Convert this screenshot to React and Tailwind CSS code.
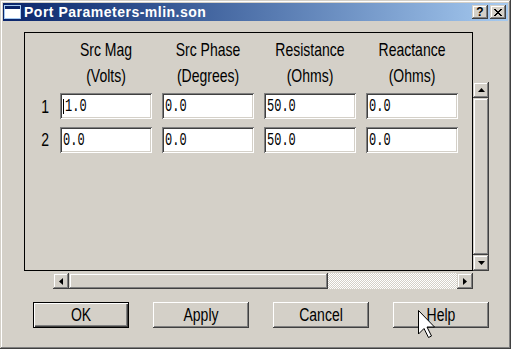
import React from "react";

const raised =
  "bg-[#d4d0c8] shadow-[inset_-1px_-1px_#404040,inset_1px_1px_#ffffff,inset_-2px_-2px_#808080,inset_2px_2px_#d4d0c8]";
const scrollRaised =
  "bg-[#d4d0c8] shadow-[inset_-1px_-1px_#404040,inset_1px_1px_#d4d0c8,inset_-2px_-2px_#808080,inset_2px_2px_#ffffff]";
const sunken =
  "bg-white shadow-[inset_1px_1px_#808080,inset_-1px_-1px_#ffffff,inset_2px_2px_#404040,inset_-2px_-2px_#d4d0c8]";

const columns = [
  ["Src Mag", "(Volts)"],
  ["Src Phase", "(Degrees)"],
  ["Resistance", "(Ohms)"],
  ["Reactance", "(Ohms)"],
];

const rows = [
  ["1.0", "0.0", "50.0", "0.0"],
  ["0.0", "0.0", "50.0", "0.0"],
];

const Tall = ({ children, className = "" }) => (
  <span className={`inline-block ${className}`}>{children}</span>
);

const Arrow = ({ dir }) => {
  const pts = {
    up: "0,4 7,4 3.5,0",
    down: "0,0 7,0 3.5,4",
    left: "4,0 4,7 0,3.5",
    right: "0,0 0,7 4,3.5",
  }[dir];
  const vert = dir === "up" || dir === "down";
  return (
    <svg width={vert ? 7 : 4} height={vert ? 4 : 7} viewBox={vert ? "0 0 7 4" : "0 0 4 7"}>
      <polygon points={pts} fill="#000" />
    </svg>
  );
};

const CellInput = ({ value, caret }) => (
  <div className={`${sunken} h-[26px] flex items-center pl-[3px]`}>
    {caret && <span className="w-px h-[15px] bg-black mr-px" />}
    <Tall className="scale-y-[1.6] font-['Liberation_Mono',monospace] text-[12px] leading-none text-black">
      {value}
    </Tall>
  </div>
);

const DlgButton = ({ label, isDefault }) => (
  <div
    className={`w-[96px] h-[26px] flex items-center justify-center text-black ${
      isDefault
        ? "border border-black bg-[#d4d0c8] shadow-[inset_1px_1px_#ffffff,inset_-1px_-1px_#404040,inset_-2px_-2px_#808080]"
        : raised
    }`}
  >
    <Tall className="scale-y-[1.25] text-[14px] leading-none">{label}</Tall>
  </div>
);

export default function App() {
  return (
    <div className="relative w-[511px] h-[349px] bg-[#d4d0c8] p-[3px] font-['Liberation_Sans',Arial,sans-serif] shadow-[inset_-1px_-1px_#404040,inset_1px_1px_#d4d0c8,inset_-2px_-2px_#808080,inset_2px_2px_#ffffff] overflow-hidden">
      {/* Title bar */}
      <div className="h-[18px] flex items-center bg-gradient-to-r from-[#0a246a] to-[#a6caf0] pl-[1px] pr-[2px]">
        <svg width="17" height="14" viewBox="0 0 17 14" className="mr-[3px]">
          <rect x="0.5" y="0.5" width="16" height="13" fill="#fff" stroke="#a6caf0" />
          <rect x="1" y="1" width="15" height="3" fill="#0a246a" />
        </svg>
        <span className="text-white font-bold text-[14px] tracking-[0.5px] leading-none">Port Parameters-mlin.son</span>
        <div className="ml-auto flex gap-[2px]">
          <div className={`${scrollRaised} w-[16px] h-[14px] flex items-center justify-center text-[12px] font-bold leading-none text-black`}>
            ?
          </div>
          <div className={`${scrollRaised} w-[16px] h-[14px] flex items-center justify-center`}>
            <svg width="8" height="7" viewBox="0 0 8 7">
              <path d="M0 0 L7 7 M1 0 L8 7 M7 0 L0 7 M8 0 L1 7" stroke="#000" strokeWidth="1" />
            </svg>
          </div>
        </div>
      </div>

      {/* Grid area */}
      <div className="flex mt-[11px] ml-[21px]">
        <div className="w-[449px]">
          <div className="h-[239px] border border-black">
            <div className="grid grid-cols-[25px_92px_92px_92px_92px] gap-x-[10px] pt-[3px]">
              <div />
              {columns.map(([a, b]) => (
                <div key={a} className="flex flex-col items-center text-[14px] text-[#000]">
                  <div className="h-[26px] flex items-center">
                    <Tall className="scale-y-[1.3] leading-none">{a}</Tall>
                  </div>
                  <div className="h-[26px] flex items-center">
                    <Tall className="scale-y-[1.3] leading-none">{b}</Tall>
                  </div>
                </div>
              ))}
            </div>
            <div className="mt-[5px] flex flex-col gap-[8px]">
              {rows.map((r, i) => (
                <div key={i} className="grid grid-cols-[25px_92px_92px_92px_92px] gap-x-[10px]">
                  <div className="flex items-center justify-end pr-[1px] text-[14px]">
                    <Tall className="scale-y-[1.3] leading-none">{i + 1}</Tall>
                  </div>
                  {r.map((v, j) => (
                    <CellInput key={j} value={v} caret={i === 0 && j === 0} />
                  ))}
                </div>
              ))}
            </div>
          </div>

          {/* Horizontal scrollbar */}
          <div className="mt-[2px] ml-[29px] w-[420px] h-[16px] flex">
            <div className={`${scrollRaised} w-[16px] h-[16px] flex items-center justify-center`}>
              <Arrow dir="left" />
            </div>
            <div className={`${scrollRaised} w-[259px] h-[16px]`} />
            <div className="flex-1 h-[16px] bg-[repeating-conic-gradient(#ffffff_0%_25%,#d4d0c8_0%_50%)] bg-[length:2px_2px]" />
            <div className={`${scrollRaised} w-[16px] h-[16px] flex items-center justify-center`}>
              <Arrow dir="right" />
            </div>
          </div>
        </div>

        {/* Vertical scrollbar */}
        <div className="mt-[50px] w-[16px] h-[189px] flex flex-col">
          <div className={`${scrollRaised} h-[16px] flex items-center justify-center`}>
            <Arrow dir="up" />
          </div>
          <div className={`${scrollRaised} flex-1`} />
          <div className={`${scrollRaised} h-[16px] flex items-center justify-center`}>
            <Arrow dir="down" />
          </div>
        </div>
      </div>

      {/* Buttons */}
      <div className="mt-[13px] ml-[30px] flex gap-[24px]">
        <DlgButton label="OK" isDefault />
        <DlgButton label="Apply" />
        <DlgButton label="Cancel" />
        <DlgButton label="Help" />
      </div>

      {/* Mouse cursor */}
      <svg className="absolute left-[418px] top-[310px]" width="18" height="29" viewBox="0 0 18 29">
        <polygon
          points="0.5,0.5 0.5,24 6,18.5 10.5,27.5 13.5,26 9,17 16.5,17"
          fill="#fff"
          stroke="#000"
          strokeWidth="1"
          strokeLinejoin="miter"
        />
      </svg>
    </div>
  );
}
